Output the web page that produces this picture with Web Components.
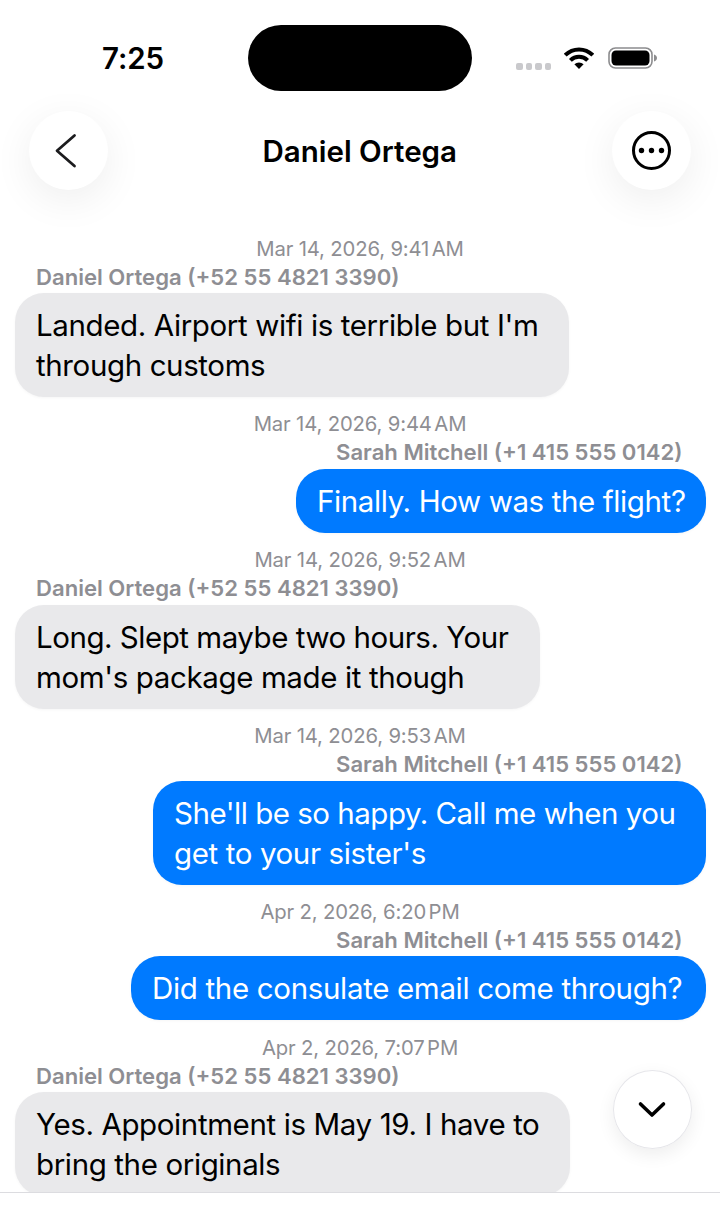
<!DOCTYPE html>
<html lang="en"><head><meta charset="utf-8"><title>Daniel Ortega</title>
<style>
html,body{margin:0;padding:0;background:#fff}
body{font-family:Inter,"Liberation Sans",sans-serif;width:720px;height:1213px;overflow:hidden}
</style></head><body>
<chat-screen>
<status-bar slot="status" time="7:25"></status-bar>
<nav-bar slot="nav" title="Daniel Ortega"></nav-bar>
<chat-message ts="Mar 14, 2026, 9:41 AM" sender="Daniel Ortega (+52 55 4821 3390)" side="in" bw="554">Landed. Airport wifi is terrible but I'm<br>through customs</chat-message>
<chat-message ts="Mar 14, 2026, 9:44 AM" sender="Sarah Mitchell (+1 415 555 0142)" side="out" bw="410">Finally. How was the flight?</chat-message>
<chat-message ts="Mar 14, 2026, 9:52 AM" sender="Daniel Ortega (+52 55 4821 3390)" side="in" bw="525"><span style="letter-spacing:-.47px">Long. Slept maybe two hours. Your</span><br>mom's package made it though</chat-message>
<chat-message ts="Mar 14, 2026, 9:53 AM" sender="Sarah Mitchell (+1 415 555 0142)" side="out" bw="553"><span style="letter-spacing:-.49px">She'll be so happy. Call me when you</span><br>get to your sister's</chat-message>
<chat-message ts="Apr 2, 2026, 6:20 PM" sender="Sarah Mitchell (+1 415 555 0142)" side="out" bw="575"><span style="letter-spacing:-.33px">Did the consulate email come through?</span></chat-message>
<chat-message ts="Apr 2, 2026, 7:07 PM" sender="Daniel Ortega (+52 55 4821 3390)" side="in" bw="555">Yes. Appointment is May 19. I have to<br>bring the originals</chat-message>
<round-button slot="float" icon="down" bordered></round-button>
</chat-screen>
<script>
const def=(n,html)=>customElements.define(n,class extends HTMLElement{
  connectedCallback(){if(this.shadowRoot)return;const r=this.attachShadow({mode:'open'});r.innerHTML=typeof html==='function'?html(this):html;}
});
const FONT='font-family:Inter,"Liberation Sans",sans-serif;';
def('chat-screen',`<style>
:host{display:flex;flex-direction:column;width:720px;height:1213px;position:relative;background:#fff;overflow:hidden;${FONT}}
.list{display:flex;flex-direction:column;height:957.3px;overflow:hidden;box-sizing:border-box}
.foot{flex:1;border-top:1px solid #dcdce0;background:#fff}
.float{position:absolute;left:613px;top:1070px}
</style>
<slot name="status"></slot><slot name="nav"></slot>
<div class="list"><slot></slot></div><div class="foot"></div>
<div class="float"><slot name="float"></slot></div>`);
def('status-bar',e=>`<style>
:host{display:flex;height:111px;box-sizing:border-box;position:relative;${FONT}}
.time{position:absolute;left:102px;top:41px;font-size:29.5px;line-height:34px;font-weight:600;color:#000;letter-spacing:-.1px}
.pill{position:absolute;left:248px;top:25px;width:224px;height:66px;border-radius:33px;background:#000}
.sig{position:absolute;left:516px;top:63px;display:flex;gap:3px}
.sig i{width:6.5px;height:6.5px;border-radius:2px;background:#c9c9cc;display:block}
svg{position:absolute}
</style>
<span class="time">${e.getAttribute('time')}</span><div class="pill"></div>
<div class="sig"><i></i><i></i><i></i><i></i></div>
<svg style="left:564px;top:47px" width="30" height="23" viewBox="0 0 30 23"><g fill="none" stroke="#000" stroke-width="4"><path d="M1.2 8.1a19.5 19.5 0 0 1 27.6 0"/><path d="M6.4 13.3a12.2 12.2 0 0 1 17.2 0"/></g><path d="M10.4 17.3a6.5 6.5 0 0 1 9.2 0L15 22z" fill="#000"/></svg>
<svg style="left:608px;top:46px" width="50" height="24" viewBox="0 0 50 24"><rect x="1" y="2" width="43" height="20" rx="6.5" fill="none" stroke="#8c8c8e" stroke-width="1.6"/><rect x="3.5" y="4.5" width="38" height="15" rx="4.5" fill="#000"/><path d="M46 8.5c1.6.4 3 1.6 3 3.5s-1.4 3.1-3 3.5z" fill="#8c8c8e"/></svg>`);
def('nav-bar',e=>`<style>
:host{display:flex;align-items:center;justify-content:space-between;height:79px;padding:0 29px 0 28.5px;box-sizing:border-box;width:720px;margin-bottom:44.7px;${FONT}}
.t{font-size:29.5px;font-weight:600;color:#000;letter-spacing:0}
</style><round-button icon="back"></round-button><div class="t">${e.getAttribute('title')}</div><round-button icon="more"></round-button>`);
const ICONS={
 back:'<path d="M45.5 24.5 28 39.7 45.5 55" fill="none" stroke="#1c1c1e" stroke-width="2.8" stroke-linecap="round" stroke-linejoin="round"/>',
 more:'<circle cx="39.5" cy="39.5" r="18" fill="none" stroke="#000" stroke-width="3"/><circle cx="29.5" cy="39.5" r="2.7"/><circle cx="39.5" cy="39.5" r="2.7"/><circle cx="49.5" cy="39.5" r="2.7"/>',
 down:'<path d="M27.5 34 39 45 50.5 34" fill="none" stroke="#000" stroke-width="3.6" stroke-linecap="round" stroke-linejoin="round"/>'
};
def('round-button',e=>`<style>
:host{display:block;width:79px;height:79px;border-radius:50%;background:#fff;box-sizing:border-box;
box-shadow:${e.hasAttribute('bordered')?'0 0 0 1px #e6e6ea inset,0 6px 18px rgba(0,0,0,.07)':'0 10px 40px rgba(0,0,0,.07)'}}
svg{display:block}
</style><svg width="79" height="79" viewBox="0 0 79 79">${ICONS[e.getAttribute('icon')]}</svg>`);
def('chat-message',e=>{const out=e.getAttribute('side')==='out';const bw=e.getAttribute('bw');
const ts=e.getAttribute('ts').replace(/ (AM|PM)$/,'<span class="m"> $1</span>');
return `<style>
:host{display:flex;flex-direction:column;width:720px;box-sizing:border-box;padding:0 14.5px;flex:none;${FONT}}
.ts{height:28px;line-height:28px;text-align:center;font-size:20.3px;color:#8e8e93;letter-spacing:-.15px}
.m{margin-left:-3px}
.s{height:29px;line-height:29px;margin-bottom:1.5px;font-size:22.1px;font-weight:600;color:#8e8e93;padding:0 23px 0 21.5px;text-align:${out?'right':'left'}}
.b{align-self:${out?'flex-end':'flex-start'};box-sizing:border-box;width:${bw}px;flex:none;padding:12px 22px 12px 21.5px;border-radius:29px;font-size:29.5px;line-height:40px;letter-spacing:-.38px;white-space:nowrap;
background:${out?'#007aff':'#e9e9eb'};color:${out?'#fff':'#000'};box-shadow:0 1px 3px rgba(0,0,0,.04);margin-bottom:13.3px}
</style><div class="ts">${ts}</div><div class="s">${e.getAttribute('sender')}</div><div class="b"><slot></slot></div>`});
</script>
</body></html>
